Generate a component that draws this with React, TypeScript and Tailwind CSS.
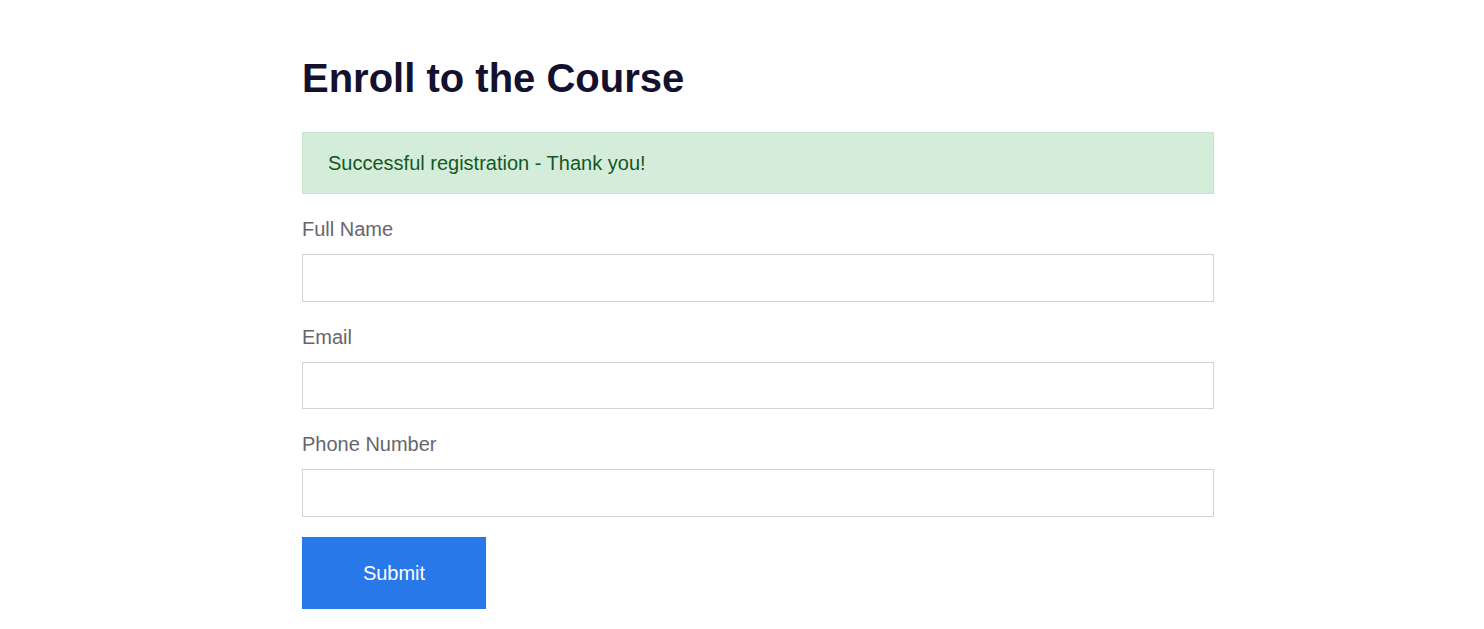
export default function App() {
  const fields = ["Full Name", "Email", "Phone Number"];
  return (
    <div className="min-h-screen bg-white" style={{ fontFamily: '"Liberation Sans", Arial, sans-serif' }}>
      <div className="ml-[302px] w-[912px] pt-[54px]">
        <h1 className="text-[40px] leading-[48px] font-bold text-[#14112e]">Enroll to the Course</h1>
        <div className="mt-[30px] h-[62px] flex items-center px-[25px] bg-[#d4edda] border border-[#c3e6cb] text-[#155724] text-[20px] leading-[24px]">
          Successful registration - Thank you!
        </div>
        {fields.map((f) => (
          <div key={f} className="mt-[23px]">
            <label className="block text-[20px] leading-[24px] text-[#67656d] mb-[13px]">{f}</label>
            <input className="block w-full h-[47.5px] border border-[#d1d1d6] bg-white outline-none px-3" />
          </div>
        ))}
        <button className="mt-[20.5px] w-[184px] h-[71.5px] bg-[#2878ea] text-white text-[20px] leading-[24px]">Submit</button>
      </div>
    </div>
  );
}
